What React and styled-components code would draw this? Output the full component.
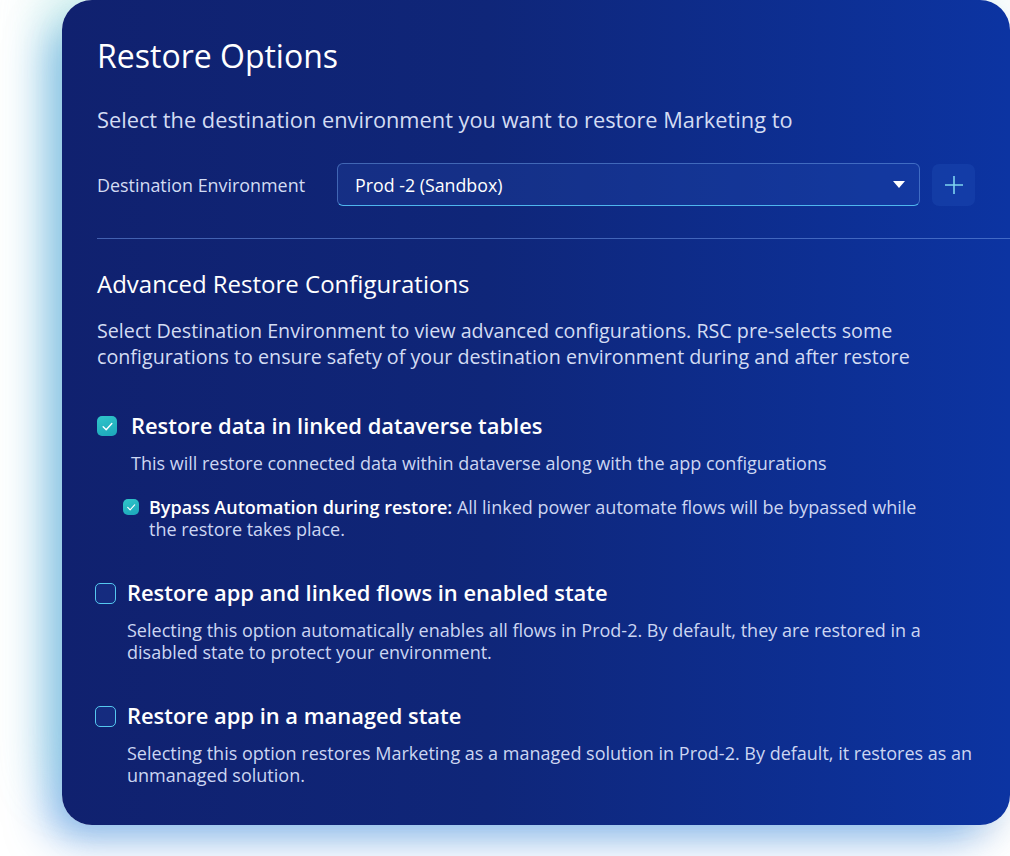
import React, {useState} from 'react';
import styled, {createGlobalStyle} from 'styled-components';

const GlobalStyle = createGlobalStyle`
  html, body {
    margin: 0;
    padding: 0;
    background: #ffffff;
  }
  body {
    font-family: "Open Sans", "Noto Sans", sans-serif;
  }
`

const Page = styled.div`
  width: 1010px;
  height: 856px;
  padding-left: 62px;
  box-sizing: border-box;
  overflow: hidden;
`

const Card = styled.section`
  width: 948px;
  height: 825px;
  box-sizing: border-box;
  border-radius: 30px;
  padding: 36px 35px 0 35px;
  color: #ffffff;
  background: linear-gradient(90deg, #10216f 0%, #0f2679 45%, #0c34a2 100%);
  box-shadow: -22px -30px 50px -6px rgba(120, 215, 205, 0.35),
              -22px 20px 40px -8px rgba(40, 130, 225, 0.5),
              0 16px 28px rgba(120, 150, 195, 0.16);
`

const Title = styled.h1`
  margin: 0;
  font-size: 32px;
  font-weight: 400;
  line-height: 40px;
`

const Lead = styled.p`
  margin: 30px 0 0;
  font-size: 21.8px;
  line-height: 28px;
  color: #d3dcf3;
`

const FieldRow = styled.div`
  display: flex;
  align-items: center;
  margin-top: 29px;
`

const FieldLabel = styled.label`
  width: 240px;
  font-size: 17.9px;
  color: #d3dcf3;
`

const Select = styled.div`
  width: 583px;
  height: 43px;
  box-sizing: border-box;
  display: flex;
  align-items: center;
  justify-content: space-between;
  padding: 0 14px 0 17px;
  border-radius: 6px;
  border: 1px solid rgba(120, 170, 240, 0.45);
  border-bottom-color: #4fb6ee;
  background: rgba(40, 80, 180, 0.25);
  font-size: 17.8px;
  color: #ffffff;
`

const Caret = styled.span`
  width: 0;
  height: 0;
  border-left: 6px solid transparent;
  border-right: 6px solid transparent;
  border-top: 7px solid #ffffff;
`

const AddButton = styled.button`
  margin-left: 12px;
  width: 43px;
  height: 42px;
  border: none;
  border-radius: 7px;
  background: rgba(30, 75, 180, 0.4);
  display: flex;
  align-items: center;
  justify-content: center;
  padding: 0;
`

const Divider = styled.hr`
  margin: 32px -35px 0 0;
  border: none;
  border-top: 1px solid rgba(110, 150, 230, 0.55);
`

const SectionTitle = styled.h2`
  margin: 30px 0 0;
  font-size: 24px;
  font-weight: 400;
  line-height: 30px;
`

const SectionText = styled.p`
  margin: 19px 0 0;
  font-size: 19.7px;
  line-height: 26px;
  color: #d3dcf3;
`

const Options = styled.div`
  display: flex;
  flex-direction: column;
  margin-top: 42px;
  gap: 39px;
`

const Option = styled.div`
  display: flex;
  flex-direction: column;
`

const OptionHead = styled.div`
  display: flex;
  align-items: center;
  gap: ${p => p.$gap}px;
  margin-left: ${p => p.$shift}px;
`

const OptionTitle = styled.span`
  font-size: 21.9px;
  font-weight: 600;
  line-height: 28px;
`

const OptionText = styled.p`
  margin: 12px 0 0 ${p => p.$indent}px;
  font-size: 18px;
  line-height: 22px;
  color: #ccd6f2;
`

const Box = styled.span`
  flex: none;
  width: ${p => p.$size}px;
  height: ${p => p.$size}px;
  box-sizing: border-box;
  border-radius: 5px;
  display: flex;
  align-items: center;
  justify-content: center;
  background: ${p => p.$checked ? 'linear-gradient(160deg, #30c6ca, #1ca6ba)' : 'rgba(30, 60, 150, 0.4)'};
  border: ${p => p.$checked ? 'none' : '1.5px solid #55c8ef'};
`

const SubOption = styled.div`
  display: flex;
  align-items: flex-start;
  gap: 10px;
  margin: 22px 0 0 26px;
  font-size: 18px;
  line-height: 22px;
  color: #ccd6f2;
`

const BoxSlot = styled.span`
  padding-top: 3px;
`

const SubText = styled.span`
  max-width: 780px;
  b {
    color: #ffffff;
    font-weight: 600;
  }
`

const Check = ({size}) => (
    <svg width={size * 0.65} height={size * 0.65} viewBox="0 0 12 12" fill="none">
        <path d="M2 6.3 L4.8 9 L10 3.2" stroke="#ffffff" strokeWidth="1.3" strokeLinecap="round" strokeLinejoin="round"/>
    </svg>
)

const Checkbox = ({checked, size}) => (
    <Box $checked={checked} $size={size}>{checked && <Check size={size}/>}</Box>
)

const options = [
    {
        title: 'Restore app and linked flows in enabled state',
        text: 'Selecting this option automatically enables all flows in Prod-2. By default, they are restored in a disabled state to protect your environment.'
    },
    {
        title: 'Restore app in a managed state',
        text: 'Selecting this option restores Marketing as a managed solution in Prod-2. By default, it restores as an unmanaged solution.'
    }
]

const App = () => {
    const [env] = useState('Prod -2 (Sandbox)')

    return (
        <Page>
            <GlobalStyle/>
            <Card>
                <Title>Restore Options</Title>
                <Lead>Select the destination environment you want to restore Marketing to</Lead>

                <FieldRow>
                    <FieldLabel>Destination Environment</FieldLabel>
                    <Select>
                        <span>{env}</span>
                        <Caret/>
                    </Select>
                    <AddButton>
                        <svg width="20" height="20" viewBox="0 0 20 20">
                            <path d="M10 1v18M1 10h18" stroke="#7fd3f0" strokeWidth="1.6"/>
                        </svg>
                    </AddButton>
                </FieldRow>

                <Divider/>

                <SectionTitle>Advanced Restore Configurations</SectionTitle>
                <SectionText>
                    Select Destination Environment to view advanced configurations. RSC pre-selects some
                    configurations to ensure safety of your destination environment during and after restore
                </SectionText>

                <Options>
                    <Option>
                        <OptionHead $gap={14} $shift={0}>
                            <Checkbox checked size={20}/>
                            <OptionTitle>Restore data in linked dataverse tables</OptionTitle>
                        </OptionHead>
                        <OptionText $indent={34}>
                            This will restore connected data within dataverse along with the app configurations
                        </OptionText>
                        <SubOption>
                            <BoxSlot><Checkbox checked size={16}/></BoxSlot>
                            <SubText>
                                <b>Bypass Automation during restore:</b> All linked power automate flows will be bypassed while the restore takes place.
                            </SubText>
                        </SubOption>
                    </Option>

                    {options.map(o => (
                        <Option key={o.title}>
                            <OptionHead $gap={11} $shift={-2}>
                                <Checkbox size={21}/>
                                <OptionTitle>{o.title}</OptionTitle>
                            </OptionHead>
                            <OptionText $indent={30}>{o.text}</OptionText>
                        </Option>
                    ))}
                </Options>
            </Card>
        </Page>
    );
};

export default App;
